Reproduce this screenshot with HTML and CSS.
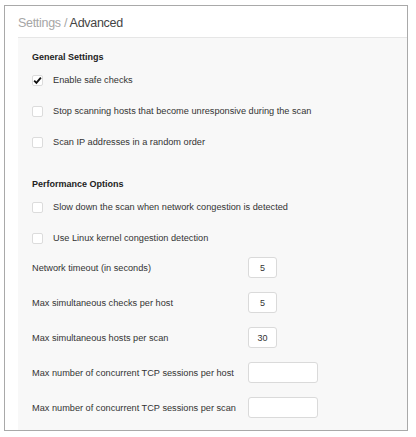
FILE: index.html
```html
<!DOCTYPE html>
<html>
<head>
<meta charset="utf-8">
<link rel="stylesheet" href="styles.css">
</head>
<body>
<div class="frame">
  <div class="header"><span class="crumb">Settings /</span> <span class="current">Advanced</span></div>
  <div class="panel">
    <div class="heading">General Settings</div>
    <div class="check-row"><span class="box"><svg width="11" height="11" viewBox="0 0 11 11"><path d="M2.2 5.6 L4.4 7.8 L8.9 2.6" fill="none" stroke="#111" stroke-width="1.9"/></svg></span><span>Enable safe checks</span></div>
    <div class="check-row"><span class="box"></span><span>Stop scanning hosts that become unresponsive during the scan</span></div>
    <div class="check-row"><span class="box"></span><span>Scan IP addresses in a random order</span></div>
    <div class="heading second">Performance Options</div>
    <div class="check-row"><span class="box"></span><span>Slow down the scan when network congestion is detected</span></div>
    <div class="check-row"><span class="box"></span><span>Use Linux kernel congestion detection</span></div>
    <div class="inputs">
      <div class="input-row"><span class="label">Network timeout (in seconds)</span><span class="field small">5</span></div>
      <div class="input-row"><span class="label">Max simultaneous checks per host</span><span class="field small">5</span></div>
      <div class="input-row"><span class="label">Max simultaneous hosts per scan</span><span class="field small">30</span></div>
      <div class="input-row"><span class="label">Max number of concurrent TCP sessions per host</span><span class="field wide"></span></div>
      <div class="input-row"><span class="label">Max number of concurrent TCP sessions per scan</span><span class="field wide"></span></div>
    </div>
  </div>
</div>
</body>
</html>
```
FILE: styles.css
```css
html, body {
  margin: 0;
  padding: 0;
  background: #ffffff;
}
body {
  font-family: "Liberation Sans", Arial, sans-serif;
  color: #333;
}
.frame {
  margin: 5px 8px 0 4px;
  height: 424px;
  border: 1px solid #a9a9a9;
  padding-left: 13px;
  background: #fff;
  display: flex;
  flex-direction: column;
}
.header {
  border-bottom: 1px solid #e6e6e6;
  font-size: 12.5px;
  letter-spacing: -0.3px;
  line-height: 35px;
  box-sizing: border-box;
  height: 32px;
  white-space: nowrap;
}
.crumb { color: #a6a6a6; }
.current { color: #444; }
.panel {
  flex: 1;
  background: #f8f8f8;
  padding: 13px 0 0 14px;
  display: flex;
  flex-direction: column;
  font-size: 9.2px;
}
.heading {
  font-weight: bold;
  font-size: 9px;
  height: 12px;
  line-height: 12px;
  margin-bottom: 7px;
  color: #222;
}
.heading.second {
  margin-top: 15px;
}
.check-row {
  height: 20px;
  display: flex;
  align-items: center;
  gap: 10px;
  margin-bottom: 11px;
  color: #333;
}
.box {
  width: 11px;
  height: 11px;
  box-sizing: border-box;
  border: 1px solid #dcdcdc;
  border-radius: 2px;
  background: #fff;
  display: flex;
  flex: none;
}
.box svg {
  margin: -1px;
}
.inputs {
  margin-top: -2px;
  display: flex;
  flex-direction: column;
  gap: 14px;
}
.input-row {
  height: 21px;
  display: flex;
  align-items: center;
}
.label {
  width: 216px;
  flex: none;
}
.field {
  height: 21px;
  box-sizing: border-box;
  border: 1px solid #dadada;
  border-radius: 3px;
  background: #fff;
  display: flex;
  align-items: center;
  justify-content: center;
  font-size: 9px;
  color: #333;
}
.field.small { width: 29px; }
.field.wide { width: 70px; }
```
